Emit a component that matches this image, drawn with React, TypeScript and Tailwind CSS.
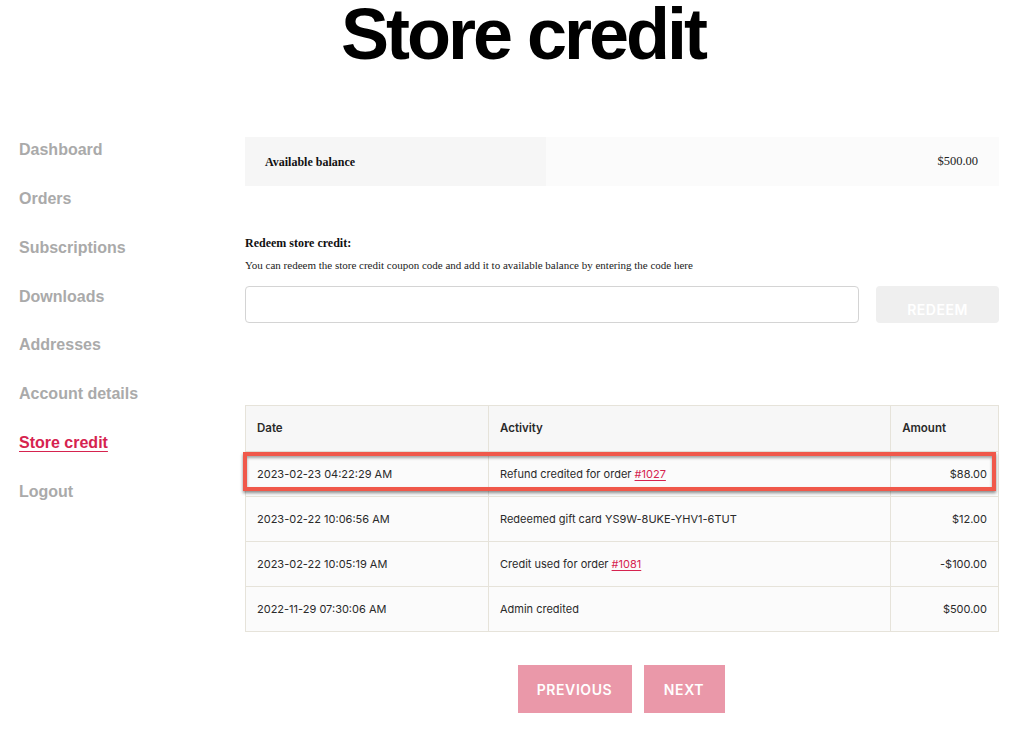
import { useState } from 'react';

const NAV = ['Dashboard', 'Orders', 'Subscriptions', 'Downloads', 'Addresses', 'Account details', 'Store credit', 'Logout'];

type Row = { date: string; activity: string; order?: string; amount: string };

const ROWS: Row[] = [
  { date: '2023-02-23 04:22:29 AM', activity: 'Refund credited for order ', order: '#1027', amount: '$88.00' },
  { date: '2023-02-22 10:06:56 AM', activity: 'Redeemed gift card YS9W-8UKE-YHV1-6TUT', amount: '$12.00' },
  { date: '2023-02-22 10:05:19 AM', activity: 'Credit used for order ', order: '#1081', amount: '-$100.00' },
  { date: '2022-11-29 07:30:06 AM', activity: 'Admin credited', amount: '$500.00' },
];

const serif = "font-['Liberation_Serif','DejaVu_Serif',serif]";
const sans = "font-['Liberation_Sans',Arial,sans-serif]";

export default function App() {
  const [code, setCode] = useState('');

  return (
    <div className="min-h-screen bg-white text-[#222]">
      {/* page title */}
      <h1 className={`${sans} pl-[22px] text-center text-[72px] leading-[68px] font-bold tracking-[-3px] text-black`}>Store credit</h1>

      <div className="flex mt-[69px]">
        {/* account nav */}
        <nav className={`${sans} w-[245px] shrink-0 pl-[19px] pt-px flex flex-col gap-[24.86px]`}>
          {NAV.map((item) => (
            <a
              key={item}
              href="#"
              className={`text-[16px] leading-6 font-bold ${item === 'Store credit' ? 'text-[#d6234f] underline underline-offset-[3px]' : 'text-[#aaaaaa]'}`}
            >
              {item}
            </a>
          ))}
        </nav>

        <main className="w-[754px] shrink-0">
          {/* balance */}
          <div className={`${serif} flex h-[49px] text-[12px]`}>
            <div className="w-[301px] bg-[#f6f6f6] flex items-center pl-5 font-bold text-[#111]">Available balance</div>
            <div className="flex-1 bg-[#fbfbfb] flex items-center justify-end pr-[21px] text-[12.5px] text-[#222]">$500.00</div>
          </div>

          {/* redeem form */}
          <p className={`${serif} mt-12 text-[12px] leading-[18px] font-bold text-[#111]`}>Redeem store credit:</p>
          <p className={`${serif} mt-1 text-[11px] leading-[18px] text-[#222]`}>
            You can redeem the store credit coupon code and add it to available balance by entering the code here
          </p>
          <div className="flex gap-[17px] mt-3">
            <input
              value={code}
              onChange={(e) => setCode(e.target.value)}
              className="w-[614px] h-[37px] border border-[#d4d4d4] rounded-[4px] px-3 outline-none"
            />
            <button className="flex-1 h-[37px] bg-[#efefef] rounded-[4px] text-white font-['Inter',sans-serif] font-semibold text-[14px] tracking-[0.5px] pt-[10px]">
              REDEEM
            </button>
          </div>

          {/* transactions */}
          <table className="mt-[82px] w-full border-collapse font-['Inter','Liberation_Sans',sans-serif] text-[11px] text-[#2a2a2a]">
            <thead>
              <tr className="bg-[#f7f7f7] h-[46px] text-[11.5px]">
                <th className="w-[243px] border border-[#e6e3da] text-left font-semibold pl-[11px]">Date</th>
                <th className="w-[402px] border border-[#e6e3da] text-left font-semibold pl-[11px]">Activity</th>
                <th className="border border-[#e6e3da] text-right font-semibold pr-[52px]">Amount</th>
              </tr>
            </thead>
            <tbody>
              {ROWS.map((row, i) => (
                <tr key={row.date} className="bg-[#fbfbfb] h-[45px]">
                  <td className="relative border border-[#e6e3da] pl-[11px]">
                    {i === 0 && (
                      <div className="absolute left-[-3px] top-0 w-[753px] h-[39px] border-4 border-[#f0584a] shadow-[0_2px_3px_rgba(0,0,0,0.45),inset_0_2px_3px_rgba(0,0,0,0.35)] pointer-events-none z-10" />
                    )}
                    {row.date}
                  </td>
                  <td className="border border-[#e6e3da] pl-[11px]">
                    {row.activity}
                    {row.order && (
                      <a href="#" className="text-[#d6234f] underline underline-offset-2">
                        {row.order}
                      </a>
                    )}
                  </td>
                  <td className="border border-[#e6e3da] text-right pr-[11px]">{row.amount}</td>
                </tr>
              ))}
            </tbody>
          </table>

          {/* pagination */}
          <div className="flex justify-center gap-3 mt-[33px] pr-[2px] font-['Inter',sans-serif] text-[14px] font-semibold tracking-[0.6px] text-white">
            <button className="w-[114px] h-[48px] bg-[#ea98a9]">PREVIOUS</button>
            <button className="w-[81px] h-[48px] bg-[#ea98a9]">NEXT</button>
          </div>
        </main>
      </div>
    </div>
  );
}
